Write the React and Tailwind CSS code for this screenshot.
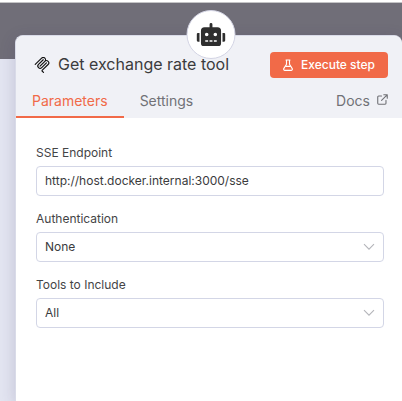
import { FaRobot } from "react-icons/fa";

function McpIcon() {
  return (
    <svg viewBox="0 0 24 24" className="size-4 shrink-0 text-[#101010]" fill="currentColor" aria-hidden="true">
      <path d="M15.688 2.343a2.588 2.588 0 00-3.61 0l-9.626 9.44a.863.863 0 01-1.203 0 .823.823 0 010-1.18l9.626-9.44a4.313 4.313 0 016.016 0 4.116 4.116 0 011.204 3.54 4.3 4.3 0 013.609 1.18l.05.05a4.115 4.115 0 010 5.9l-8.706 8.537a.274.274 0 000 .393l1.788 1.754a.823.823 0 010 1.18.863.863 0 01-1.203 0l-1.788-1.753a1.92 1.92 0 010-2.754l8.706-8.538a2.47 2.47 0 000-3.54l-.05-.049a2.588 2.588 0 00-3.607-.003l-7.172 7.034-.002.002-.098.097a.863.863 0 01-1.204 0 .823.823 0 010-1.18l7.273-7.133a2.47 2.47 0 00-.003-3.537z" />
      <path d="M14.485 4.703a.823.823 0 000-1.18.863.863 0 00-1.204 0l-7.119 6.982a4.115 4.115 0 000 5.9 4.314 4.314 0 006.016 0l7.12-6.982a.823.823 0 000-1.18.863.863 0 00-1.204 0l-7.119 6.982a2.588 2.588 0 01-3.61 0 2.47 2.47 0 010-3.54l7.12-6.982z" />
    </svg>
  );
}

function FlaskIcon() {
  return (
    <svg viewBox="0 0 10 12" className="h-3 w-[10px]" fill="none" stroke="currentColor" strokeWidth="1.1" strokeLinecap="round" strokeLinejoin="round" aria-hidden="true">
      <path d="M3 1h4M3.5 1v4.2L.9 9.4c-.6 1 0 2 1 2h6.2c1 0 1.6-1 1-2L6.5 5.2V1M3.2 7.4h3.6" />
    </svg>
  );
}

function ExternalIcon() {
  return (
    <svg viewBox="0 0 12 12" className="size-[11px]" fill="none" stroke="currentColor" strokeWidth="1.2" strokeLinecap="round" strokeLinejoin="round" aria-hidden="true">
      <path d="M5 2.2H1.8c-.6 0-1 .4-1 1v7c0 .6.4 1 1 1h7c.6 0 1-.4 1-1V7M7.4.8h3.8v3.8M11 1 5 7" />
    </svg>
  );
}

const control = "block h-[30px] w-full appearance-none rounded-sm border border-[#d3d6e6] bg-white px-2 text-xs text-[#3b3b3d] outline-none";

function Field({ id, label, children }) {
  return (
    <div className="flex flex-col gap-1">
      <label htmlFor={id} className="text-xs leading-[18px] text-[#444446]">{label}</label>
      {children}
    </div>
  );
}

function SelectField({ id, label, options }) {
  return (
    <Field id={id} label={label}>
      <div className="relative">
        <select id={id} className={control}>
          {options.map((o) => <option key={o}>{o}</option>)}
        </select>
        <svg viewBox="0 0 12 8" className="pointer-events-none absolute top-[11px] right-[9px] h-2 w-3" fill="none" stroke="#b4b5ba" strokeWidth="1.1" aria-hidden="true">
          <path d="M1 1.2 6 6.2 11 1.2" />
        </svg>
      </div>
    </Field>
  );
}

export default function App() {
  return (
    <div className="flex min-h-screen flex-col overflow-hidden bg-[linear-gradient(#fff_2px,#c4c4c6_2px,#c4c4c6_3px,#706e78_3px,#706e78_59px,#e3e5f1_59px)] pt-[35px] pl-[15px] font-['Inter',sans-serif]">
      <main className="relative flex grow flex-col rounded-t-lg border-t border-l border-[#d9dbe8] bg-white shadow-[0_4px_16px_rgba(60,50,100,0.2)]">
        <header className="rounded-t-lg bg-[#f0f1f6]">
          <div className="flex h-[58px] items-center gap-2 pr-[14px] pl-[18px]">
            <McpIcon />
            <h1 className="grow pb-0.5 text-base whitespace-nowrap text-[#3b3b3d]">Get exchange rate tool</h1>
            <button className="flex h-[26px] items-center gap-2 rounded-sm bg-[#f16a48] px-[13px] text-xs font-medium whitespace-nowrap text-white">
              <FlaskIcon />
              Execute step
            </button>
          </div>
          <nav className="flex h-6 text-sm leading-[14px] text-[#707176]">
            <a href="#parameters" className="border-b-2 border-[#f16a48] px-4 text-[#f16a48]">Parameters</a>
            <a href="#settings" className="px-4">Settings</a>
            <a href="#docs" className="mr-[14px] ml-auto flex items-start gap-[7px]">Docs <ExternalIcon /></a>
          </nav>
        </header>
        <div className="absolute -top-[26px] left-[50.5%] flex size-[49px] -translate-x-1/2 items-center justify-center rounded-full border border-[#d3d4e4] bg-white">
          <FaRobot className="h-[23px] w-[29px] text-[#2e2e2e]" aria-hidden="true" />
        </div>
        <form className="flex flex-col gap-3.5 pt-[26px] pr-[18px] pl-5">
          <Field id="endpoint" label="SSE Endpoint">
            <input id="endpoint" type="text" defaultValue="http://host.docker.internal:3000/sse" className={`${control} pb-0.5`} />
          </Field>
          <SelectField id="auth" label="Authentication" options={["None"]} />
          <SelectField id="tools" label="Tools to Include" options={["All"]} />
        </form>
      </main>
    </div>
  );
}
